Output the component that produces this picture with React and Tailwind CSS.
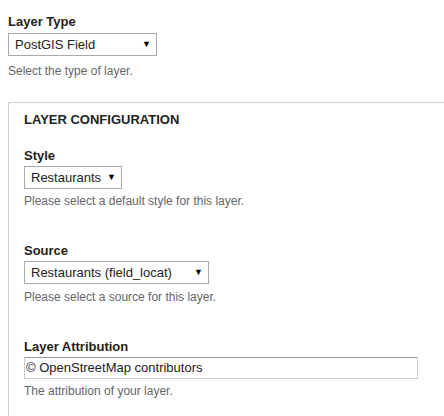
export default function App() {
  const font = { fontFamily: '"Liberation Sans", Arial, sans-serif' };
  const Select = ({ text, w }) => (
    <div className={`flex items-center justify-between h-[23px] border border-[#aaaaaa] bg-white pl-[6px] pr-[5px] text-[13px] text-[#222] ${w}`}>
      <span>{text}</span>
      <span className="text-[9px] text-black">▼</span>
    </div>
  );
  return (
    <div className="bg-white w-[444px] h-[416px] overflow-hidden pl-2 pt-[14px] text-[#222]" style={font}>
      <div className="text-[13px] font-bold leading-4 text-[#222]">Layer Type</div>
      <div className="mt-[3px]">
        <Select text="PostGIS Field" w="w-[149px]" />
      </div>
      <div className="mt-[8px] text-[12px] leading-[14px] text-[#666]">Select the type of layer.</div>
      <div className="mt-[24px] border-l border-t border-[#cccccc] pl-[15px] pt-[9px] pb-8">
        <div className="text-[13px] font-bold leading-4 text-[#222] uppercase">Layer Configuration</div>
        <div className="mt-[20px] text-[13px] font-bold leading-4">Style</div>
        <div className="mt-[2px]"><Select text="Restaurants" w="w-[98px]" /></div>
        <div className="mt-[5px] text-[12px] leading-[14px] text-[#666]">Please select a default style for this layer.</div>
        <div className="mt-[35px] text-[13px] font-bold leading-4">Source</div>
        <div className="mt-[2px]"><Select text="Restaurants (field_locat)" w="w-[185px]" /></div>
        <div className="mt-[6px] text-[12px] leading-[14px] text-[#666]">Please select a source for this layer.</div>
        <div className="mt-[35px] text-[13px] font-bold leading-4">Layer Attribution</div>
        <div className="mt-[2px] w-[394px] h-[22px] border border-[#cccccc] border-t-[#999999] pl-[1px] text-[13px] leading-[20px] text-[#222]">© OpenStreetMap contributors</div>
        <div className="mt-[5px] text-[12px] leading-[14px] text-[#666]">The attribution of your layer.</div>
      </div>
    </div>
  );
}
